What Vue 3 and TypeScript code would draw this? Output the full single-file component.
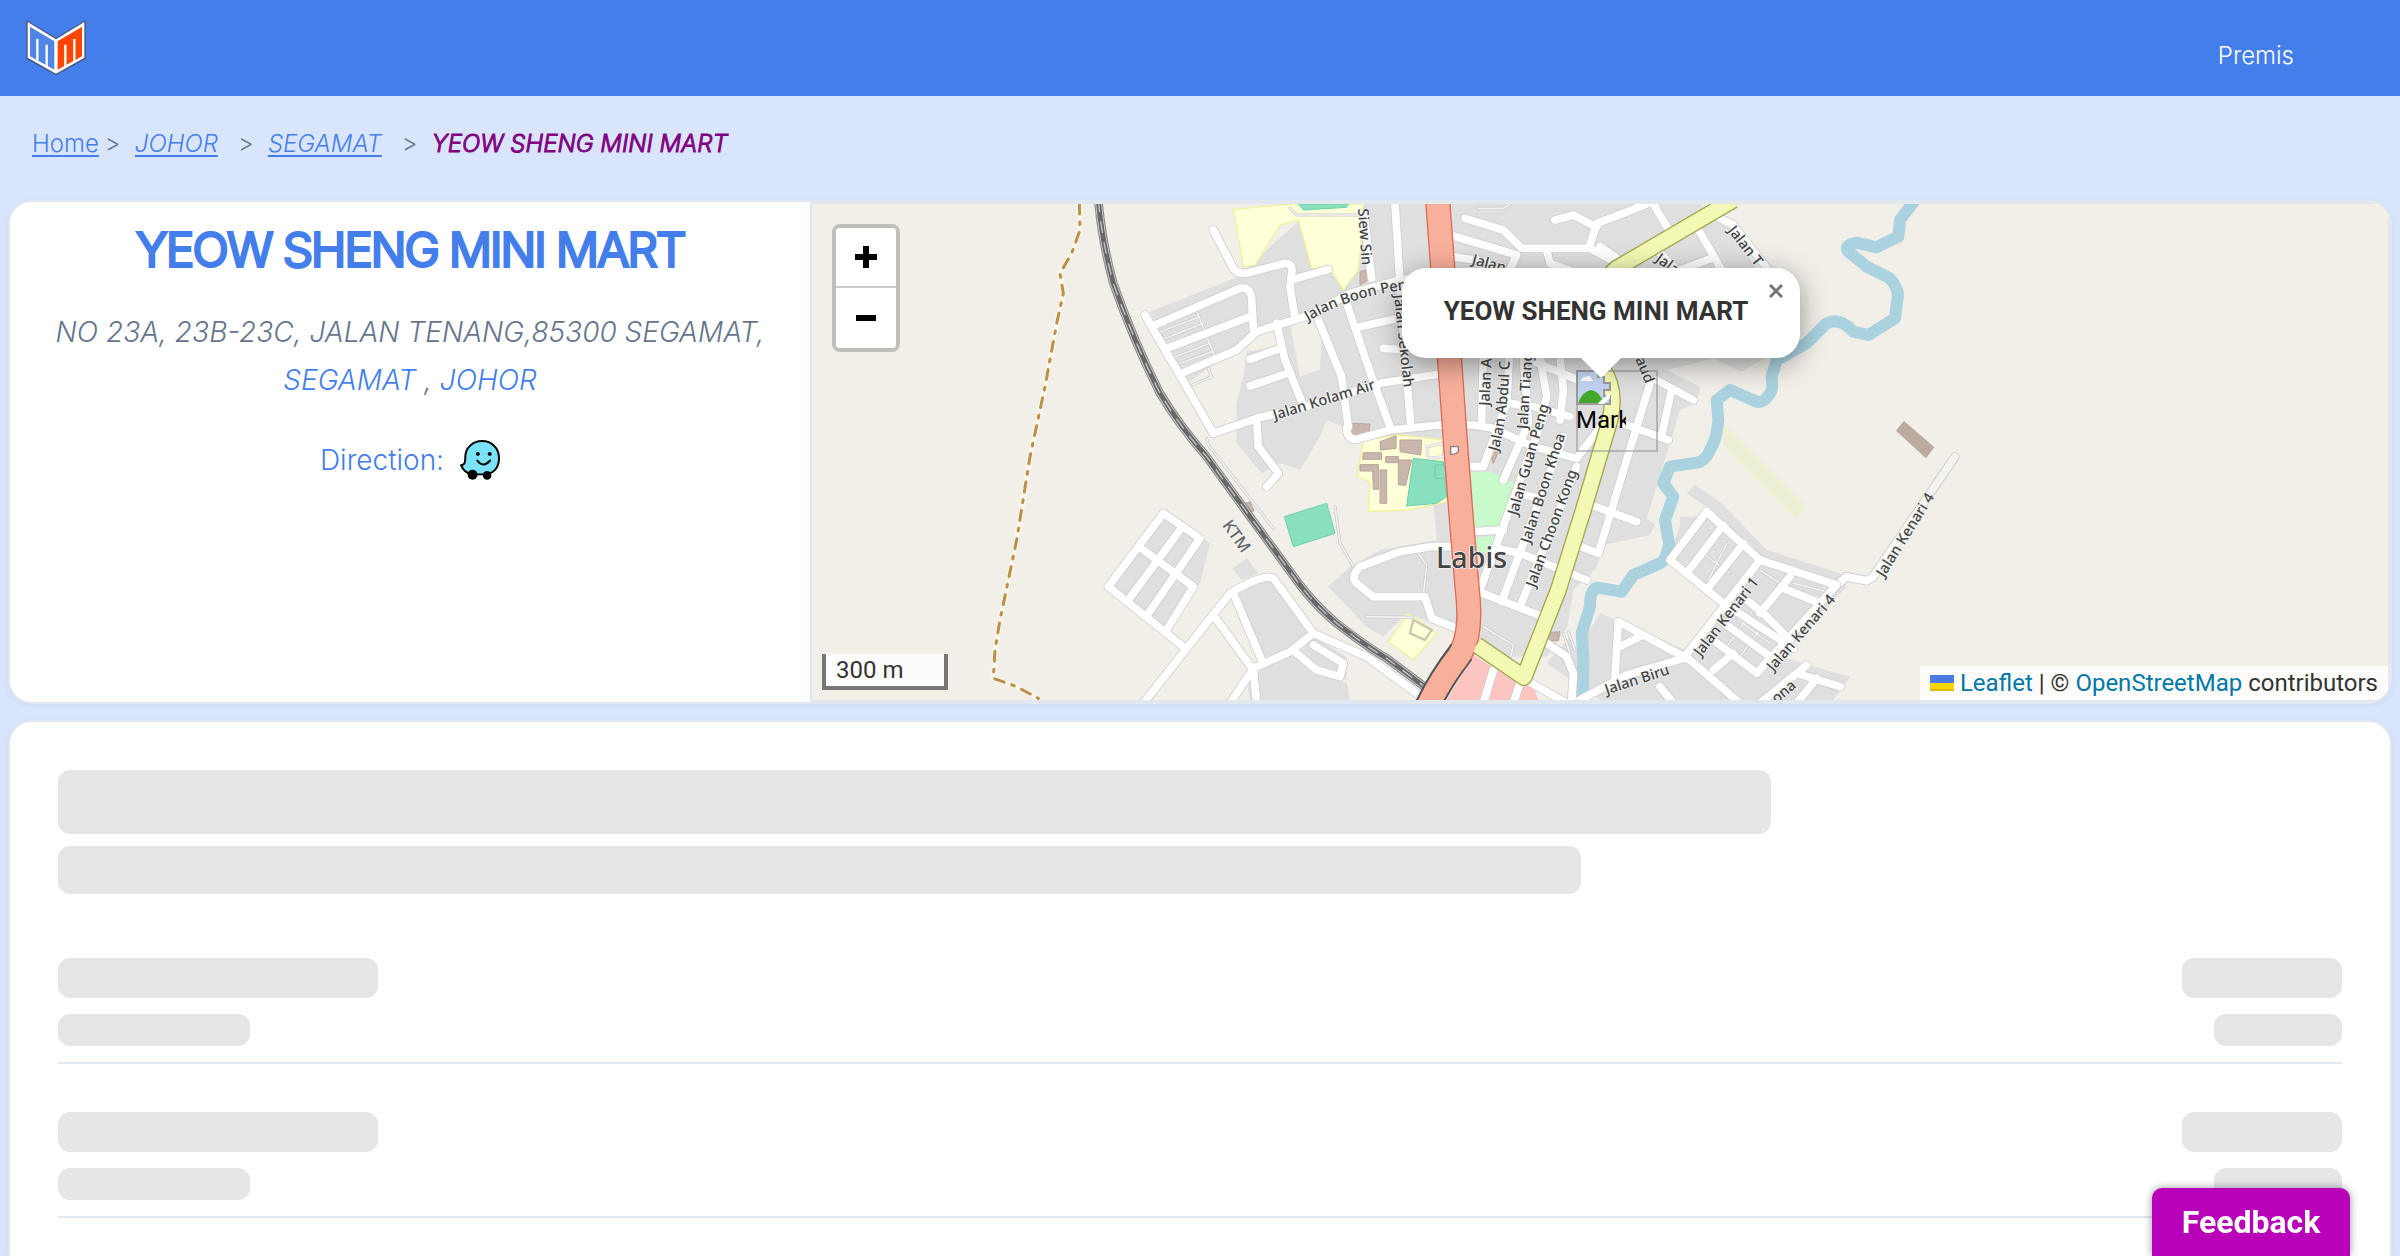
<script setup lang="ts">
interface StreetLabel {
  text: string
  x: number
  y: number
  angle: number
}

const crumbs = ['JOHOR', 'SEGAMAT']
const skeletonRows = [1, 2]

const residential = [
  '1050,365 1310,262 1400,180 1500,90 1680,42 2700,42 2790,110 2870,240 2900,500 2825,545 2740,505 2600,540 2700,590 2690,640 2640,660 2610,760 2540,985 2565,1005 2550,1035 2410,1065 2390,1130 2335,1200 2310,1300 2240,1400 2050,1400 1950,1320 1820,1270 1750,1340 1700,1310 1585,1190 1650,1130 1740,1080 1910,1050 1900,940 1930,750 1690,735 1580,690 1560,740 1500,840 1440,820 1385,850 1310,760 1310,640 1330,560 1340,485 1440,470 1430,400 1370,425 1150,590',
  '1090,965 1230,1060 1200,1180 1100,1320 920,1195',
  '1340,1105 1375,1150 1325,1170 1298,1135',
  '1310,1215 1390,1170 1520,1330 1480,1380 1395,1400',
  '1350,1180 1420,1165 1530,1330 1460,1390 1340,1470 1350,1530 1650,1530 1640,1480 1540,1440 1490,1400 1540,1340 1640,1400 1640,1470 1560,1450',
  '2685,885 2760,935 2900,1080 3120,1150 3140,1190 2940,1400 3150,1460 3100,1530 2400,1530 2240,1420 2310,1340 2400,1270 2670,1385 2770,1255 2600,1110 2640,1010 2640,980 2700,980 2720,950 2660,910',
]

const openLand = [
  '1470,400 1540,380 1565,450 1560,540 1500,560',
  '2320,1200 2360,1160 2400,1180 2400,1270 2330,1380 2300,1320',
]

const buildings = [
  '1645,700 1710,702 1705,735 1640,738',
  '1740,755 1788,738 1788,775 1742,780',
  '1800,750 1865,750 1862,795 1800,785',
  '1690,788 1745,788 1745,808 1688,808',
  '1680,824 1735,824 1735,898 1720,898 1718,843 1680,843',
  '1740,840 1760,840 1760,940 1740,940',
  '1757,800 1795,800 1795,818 1757,818',
  '1795,810 1835,810 1830,830 1817,886 1795,884',
  '2070,790 2095,785 2080,820',
  '2245,1328 2280,1325 2275,1352 2240,1352',
  '1680,245 1695,240 1705,270 1680,285',
  '1335,940 1350,935 1362,962 1350,968',
]

const servicePaths = [
  'M1470,55 L1490,75 L1680,75',
  'M1220,745 L1225,765 L1420,1015',
  'M1605,950 L1620,1060 L1660,1130',
  'M1855,1090 L1880,1125 L1870,1215',
  'M1700,1280 L1840,1282',
  'M1190,365 L1245,500',
  'M1080,425 L1200,380 M1090,448 L1210,400 M1115,505 L1230,460 M1125,525 L1235,485 M1165,590 L1235,560 L1225,535',
  'M2050,1310 L2140,1365 L2130,1410',
  'M2700,1085 L2790,1150 M2740,1030 L2670,1150 M2780,1060 L2720,1180 M2815,1290 L2910,1360 M2860,1260 L2780,1370 M2900,1290 L2820,1400',
  'M2880,1140 L2940,1180 L2900,1240 M2980,1180 L3080,1205 M2970,1195 L3070,1225',
  'M2035,55 L2110,55 L2130,42 M1880,770 L1930,760 L1930,800 L1885,805 Z',
  'M2290,1330 L2310,1390 M2305,1325 L2325,1380',
]

const streets = [
  'M1240,120 L1300,235 Q1315,255 1345,248 L1455,220 Q1480,220 1475,250 L1470,290 L1485,385',
  'M1035,375 L1240,730',
  'M1240,730 L1370,685 L1500,655 L1750,578 L1920,552',
  'M1065,405 L1320,295 Q1355,290 1355,330 L1360,415',
  'M1100,475 L1350,380',
  'M1145,550 L1310,480 L1370,425 L1530,375 L1650,310 L1800,270 L1920,250',
  'M1430,400 L1455,510 L1505,635',
  'M1350,508 L1440,475',
  'M1350,588 L1470,548',
  'M1370,690 L1375,770 L1435,850 L1400,890',
  'M1480,268 L1585,238',
  'M1555,390 L1625,560 L1645,710',
  'M1640,340 L1715,560 L1770,710',
  'M1680,410 L1795,385',
  'M1750,475 L1820,480',
  'M1640,715 Q1640,750 1670,748 L1770,720 L1920,705 L2020,705 L2080,715 L2200,770 L2330,805 L2410,700',
  'M1785,42 L1800,280 L1815,500 L1832,705',
  'M1692,70 L1715,265',
  'M1950,135 L2150,195 L2130,240',
  'M1995,85 L2110,120 L2165,175 L2370,175 L2460,225',
  'M1955,200 L2060,215',
  'M2240,180 L2250,220 L2320,245',
  'M2370,165 L2390,100 L2470,70 L2540,42',
  'M2265,90 L2320,75 L2390,112',
  'M2560,42 L2605,118',
  'M2690,110 L2765,240',
  'M2640,240 L2735,205',
  'M2750,80 L2800,105 L2905,240',
  'M2400,170 L2465,215',
  'M2580,190 L2640,250',
  'M2050,500 L2045,700',
  'M2128,500 L2120,640 L2050,830 L2000,830',
  'M2170,500 L2185,700 L2110,870',
  'M2220,500 L2240,620 L2220,700',
  'M2280,500 L2290,600 L2280,690',
  'M2190,510 L2360,580',
  'M2130,640 L2200,650 L2310,680',
  'M2230,680 L2040,1200',
  'M2290,740 L2105,1235',
  'M2330,830 L2160,1250',
  'M2035,1205 L2215,1275',
  'M2090,1075 L2160,1090 L2360,1170',
  'M2015,1025 L2110,1020',
  'M2150,910 L2220,925',
  'M2360,940 L2510,995',
  'M2550,580 L2395,1090 L2330,1065',
  'M2570,570 L2680,630',
  'M2615,600 L2585,735',
  'M2440,690 L2605,750',
  'M1970,1070 L1890,1070 L1800,1085 L1680,1130 Q1650,1160 1670,1180 L1720,1220 L1875,1220 L1895,1285 L1970,1315',
  'M1090,970 L925,1190 L1150,1370',
  'M1090,970 L1200,1045 L1045,1270',
  'M1140,1020 L985,1230',
  'M1030,1080 L1180,1190 L1100,1320',
  'M1030,1540 L1290,1210 Q1390,1150 1420,1165 L1540,1330 L1700,1400 L1850,1510',
  'M1240,1275 L1360,1440 L1370,1540',
  'M1300,1210 L1385,1410',
  'M1290,1540 L1360,1435 L1470,1385 L1540,1330',
  'M1490,1390 L1550,1440 L1620,1460 L1630,1420 L1540,1365',
  'M2170,1465 L2300,1540',
  'M2240,1360 L2300,1400 L2320,1450 L2315,1540',
  'M2080,1440 L2050,1540',
  'M2160,1480 L2140,1540',
  'M2340,1530 L2480,1455 L2650,1405 L2880,1110',
  'M2455,1295 L2670,1410 L2820,1540',
  'M2455,1295 L2445,1460',
  'M2460,1370 L2520,1340',
  'M2580,1490 L2620,1540',
  'M2720,965 L2610,1110 L2770,1240 L2980,1375',
  'M2720,965 L2880,1110 L3110,1185 L2870,1450 L2740,1350',
  'M2770,1005 L2660,1150',
  'M2830,1060 L2720,1200',
  'M2970,1160 L2880,1270',
  'M2950,1195 L3060,1240',
  'M2840,1230 L2890,1270 L2970,1350',
  'M2760,1290 L2910,1400',
  'M2800,1390 L2740,1440',
  'M2880,1540 L3020,1425',
  'M2990,1450 L3120,1490',
  'M3050,1465 L2990,1540',
]

const river =
  'M3345,30 L3300,90 L3295,140 Q3260,155 3230,172 L3170,158 Q3130,165 3145,185 L3200,230 L3270,265 Q3300,300 3292,330 L3285,385 L3205,435 L3160,425 Q3120,380 3080,400 L3020,460 L2930,510 L2915,560 Q2920,600 2910,610 Q2890,640 2870,635 L2790,600 L2750,630 L2755,690 Q2750,750 2730,780 Q2715,815 2690,818 L2610,830 L2590,880 L2620,920 L2595,990 L2607,1060 Q2600,1110 2580,1120 L2500,1155 L2465,1205 L2390,1193 Q2370,1200 2370,1250 L2345,1330 L2350,1400 L2348,1540'

const railway =
  'M895,30 Q905,150 940,280 Q1000,450 1080,610 Q1140,710 1220,800 L1350,980 L1500,1185 Q1550,1250 1610,1300 Q1700,1370 1760,1405 L1880,1495'
const trunk = 'M1913,30 L1948,500 L1968,780 L1985,1000 L2002,1200 Q2018,1340 1975,1400 Q1920,1470 1880,1555'
const secondary =
  'M2800,30 L2450,235 Q2370,300 2380,420 L2410,540 Q2450,600 2430,690 L2350,960 L2275,1200 L2172,1462 L2030,1365'
const footpath =
  'M838,42 L840,120 L815,190 L780,250 L790,310 L770,400 L735,590 L690,800 L650,1050 L600,1290 L585,1380 L580,1465 L650,1490 L715,1525'

const labels: StreetLabel[] = [
  { text: 'Siew Sin', x: 1674, y: 56, angle: 86 },
  { text: 'Jalan Kolam Air', x: 1424, y: 690, angle: -17 },
  { text: 'Jalan Sekolah', x: 1782, y: 315, angle: 84 },
  { text: 'Jalan A', x: 2068, y: 648, angle: -87 },
  { text: 'Jalan Tiang', x: 2182, y: 718, angle: -86 },
  { text: 'Jalan Guan Peng', x: 2152, y: 978, angle: -74 },
  { text: 'Jalan Boon Khoa', x: 2190, y: 1062, angle: -72 },
  { text: 'Jalan Choon Kong', x: 2205, y: 1194, angle: -70 },
  { text: 'aud', x: 2506, y: 508, angle: 68 },
  { text: 'Jalan', x: 2014, y: 222, angle: 15 },
  { text: 'Jalan', x: 2564, y: 212, angle: 36 },
  { text: 'Jalan T', x: 2782, y: 122, angle: 52 },
  { text: 'Jalan Kenari 1', x: 2702, y: 1402, angle: -52 },
  { text: 'Jalan Kenari 4', x: 2920, y: 1446, angle: -49 },
  { text: 'Jalan Kenari 4', x: 3252, y: 1164, angle: -58 },
  { text: 'Jalan Biru', x: 2420, y: 1514, angle: -18 },
  { text: 'ona', x: 2930, y: 1542, angle: -40 },
]
</script>

<template>
  <div class="page">
    <header class="topbar">
      <a href="#" class="brand" aria-label="Home">
        <svg viewBox="48 42 180 168" width="60" height="56">
          <path d="M49 42 L138 95 L227 42 V158 L138 208 L49 158 Z" fill="#4a5578" />
          <path d="M53 48 L138 100 L223 48 V155 L138 203 L53 155 Z" fill="#fff" />
          <path d="M60 62 L133 106 V191 L60 151 Z" fill="#5085e8" />
          <path d="M143 106 L216 62 V151 L143 191 Z" fill="#ff4500" />
          <path d="M82 164 V99 M110 180 V116 M166 180 V116 M193 164 V99" stroke="#fff" stroke-width="7" fill="none" />
        </svg>
      </a>
      <nav><a href="#" class="nav-link">Premis</a></nav>
    </header>

    <nav class="breadcrumb" aria-label="Breadcrumb">
      <a href="#">Home</a>
      <template v-for="crumb in crumbs" :key="crumb">
        <span class="sep">&gt;</span>
        <a href="#" class="place">{{ crumb }}</a>
      </template>
      <span class="sep">&gt;</span>
      <span class="current">YEOW SHENG MINI MART</span>
    </nav>

    <main class="content">
      <section class="store">
        <div class="info">
          <h1>YEOW SHENG MINI MART</h1>
          <address>
            NO 23A, 23B-23C, JALAN TENANG,85300 SEGAMAT,
            <br />
            <a href="#">SEGAMAT</a> , <a href="#">JOHOR</a>
          </address>
          <div class="direction">
            <span>Direction:</span>
            <a href="#" aria-label="Waze">
              <svg viewBox="66 60 121 121" width="40" height="40">
                <path
                  d="M133 63 C104 63 82 84 82 112 C82 130 80 135 69 136 C74 149 84 160 102 164 H140 C168 164 184 142 184 115 C184 84 161 63 133 63 Z"
                  fill="#7be3f7"
                  stroke="#000"
                  stroke-width="6"
                  stroke-linejoin="round"
                />
                <circle cx="104" cy="165" r="15" />
                <circle cx="148" cy="167" r="13" />
                <circle cx="120" cy="102" r="6" />
                <circle cx="156" cy="102" r="6" />
                <path d="M118 122 Q136 146 157 122" fill="none" stroke="#000" stroke-width="6" stroke-linecap="round" />
              </svg>
            </a>
          </div>
        </div>

        <div class="map">
          <svg class="tiles" viewBox="36 42 4728 1488" preserveAspectRatio="xMidYMid slice" aria-label="Map of Labis">
            <polygon v-for="area in residential" :key="area" :points="area" fill="#dfdfdf" />
            <polygon v-for="area in openLand" :key="area" :points="area" fill="#f2efe9" />
            <g stroke="#f0f0a0" stroke-width="4" fill="#ffffd8">
              <polygon
                points="1300,58 1480,42 1690,42 1690,80 1675,240 1630,300 1590,235 1535,235 1495,90 1440,105 1365,225 1330,230"
              />
              <polygon points="1690,750 1800,735 1935,750 1940,935 1830,960 1705,965 1710,875 1672,860" />
              <polygon points="1825,1270 1910,1330 1840,1410 1765,1355" />
            </g>
            <path d="M1840,1290 L1895,1320 L1875,1350 L1830,1330 Z" fill="none" stroke="#c8c8b0" stroke-width="7" />
            <g stroke="#6fcfa8" stroke-width="3" fill="#88e0be">
              <polygon points="1495,42 1645,42 1640,52 1510,60" />
              <polygon points="1453,980 1580,940 1605,1030 1480,1070" />
              <polygon points="1840,805 1930,815 1940,920 1910,940 1820,948" />
              <polygon points="1905,825 1935,825 1937,865 1905,865" />
            </g>
            <g fill="#c8facc">
              <polygon points="2005,850 2070,842 2140,880 2100,1010 2015,1015" />
              <polygon points="2020,1045 2100,1035 2070,1090 2025,1085" />
            </g>
            <polygon points="2020,1395 2090,1440 2200,1490 2215,1530 1940,1530" fill="#fdc5c2" />
            <polygon points="2770,700 3015,945 2990,990 2770,770" fill="#eef0d5" />
            <polygon points="3312,693 3403,772 3378,805 3288,722" fill="#bca9a0" />
            <path :d="river" fill="none" stroke="#aad3df" stroke-width="36" stroke-linejoin="round" />
            <g fill="#c9b7ae" stroke="#b8a39a" stroke-width="3">
              <polygon v-for="shape in buildings" :key="shape" :points="shape" />
            </g>
            <g fill="none" stroke-linecap="round" stroke-linejoin="round">
              <path v-for="d in servicePaths" :key="d" :d="d" stroke="#cacaca" stroke-width="9" />
              <path v-for="d in servicePaths" :key="'f' + d" :d="d" stroke="#f2f2f2" stroke-width="5" />
              <path d="M3465,800 L3220,1160 L3200,1172 L3140,1160 L3105,1190" stroke="#c8c8c8" stroke-width="28" />
              <path d="M3465,800 L3220,1160 L3200,1172 L3140,1160 L3105,1190" stroke="#f5f3ef" stroke-width="23" />
              <path d="M3340,985 L3220,1160 L3200,1172 L3140,1160 L3105,1190" stroke="#fff" stroke-width="23" />
              <path v-for="d in streets" :key="d" :d="d" stroke="#cfcfcf" stroke-width="28" />
              <path v-for="d in streets" :key="'f' + d" :d="d" stroke="#fff" stroke-width="23" />
            </g>
            <g fill="none" stroke-linejoin="round">
              <path :d="railway" stroke="#8c8c8c" stroke-width="26" />
              <path :d="railway" stroke="#dcdcdc" stroke-width="19" />
              <path :d="railway" stroke="#686868" stroke-width="15" />
              <path :d="railway" stroke="#c4c4c4" stroke-width="4" stroke-dasharray="36 28" />
              <path :d="footpath" stroke="#fbf6ea" stroke-width="15" />
              <path :d="footpath" stroke="#b8924a" stroke-width="9" stroke-dasharray="30 24 8 24" stroke-linecap="round" />
              <path :d="secondary" stroke="#a0a850" stroke-width="52" />
              <path :d="trunk" stroke="#dd6b5b" stroke-width="76" />
              <path d="M1985,1385 Q1920,1470 1880,1555" stroke="#555" stroke-width="80" />
              <path :d="secondary" stroke="#f3f8b4" stroke-width="44" />
              <path :d="trunk" stroke="#f9b09b" stroke-width="68" />
            </g>
            <path d="M1952,770 H1975 V785 Q1965,795 1952,793 Z" fill="#fff" stroke="#8a7a78" stroke-width="4" />
            <g class="street-labels">
              <text v-for="(label, i) in labels" :key="i" :transform="`translate(${label.x} ${label.y}) rotate(${label.angle})`">
                {{ label.text }}
              </text>
              <path id="boon-peng" d="M1524,394 Q1650,318 1840,296" fill="none" stroke="none" />
              <text><textPath href="#boon-peng">Jalan Boon Peng</textPath></text>
              <path id="abdul" d="M2094,786 Q2126,680 2130,480" fill="none" stroke="none" />
              <text><textPath href="#abdul">Jalan Abdul C</textPath></text>
            </g>
            <text class="rail-label" transform="translate(1265 1006) rotate(54)">KTM</text>
            <text class="town-label" x="1908" y="1135">Labis</text>
          </svg>

          <div class="zoom">
            <button type="button" aria-label="Zoom in">
              <svg viewBox="0 0 22 22" width="22" height="22"><path d="M8 0h6v8h8v6h-8v8H8v-8H0V8h8z" /></svg>
            </button>
            <button type="button" aria-label="Zoom out">
              <svg viewBox="0 0 22 22" width="22" height="22"><path d="M1 8h20v6H1z" /></svg>
            </button>
          </div>

          <div class="marker">
            <svg viewBox="0 0 36 36" width="36" height="36">
              <path d="M1 1 H22 V7 H28 V13 H34 V20 H28 V26 H34 V34 H1 Z" fill="#c2d3f2" stroke="#9a9a9a" stroke-width="2" />
              <path d="M5 10 Q7 6 10 7 Q13 4 15 8 L17 11 H5 Z" fill="#fff" />
              <path d="M2 33 Q7 21 15 20 Q22 21 26 29 L22 33 Z" fill="#43a82a" />
              <path d="M22 34 L34 22 V28 L28 34 Z" fill="#fff" />
            </svg>
            <span>Mark</span>
          </div>

          <div class="popup">
            <strong>YEOW SHENG MINI MART</strong>
            <button type="button" aria-label="Close popup">
              <svg viewBox="0 0 14 14" width="14" height="14">
                <path d="M1 1 L13 13 M13 1 L1 13" stroke="#757575" stroke-width="3" />
              </svg>
            </button>
          </div>

          <div class="scale">300 m</div>

          <div class="attribution">
            <svg viewBox="0 0 12 8" width="24" height="16">
              <path fill="#4C7BE1" d="M0 0h12v4H0z" />
              <path fill="#FFD500" d="M0 4h12v3H0z" />
              <path fill="#E0BC00" d="M0 7h12v1H0z" />
            </svg>
            <a href="#">Leaflet</a> | © <a href="#">OpenStreetMap</a> contributors
          </div>
        </div>
      </section>

      <section class="prices" aria-busy="true">
        <div class="bone title-bone"></div>
        <div class="bone subtitle-bone"></div>
        <div class="rows">
          <div v-for="row in skeletonRows" :key="row" class="row">
            <div class="pair">
              <div class="bone name-bone"></div>
              <div class="bone detail-bone"></div>
            </div>
            <div class="pair end">
              <div class="bone price-bone"></div>
              <div class="bone date-bone"></div>
            </div>
          </div>
        </div>
      </section>
    </main>

    <button type="button" class="feedback">Feedback</button>
  </div>
</template>

<style>
body {
  margin: 0;
  background: #d9e5fb;
}
</style>

<style scoped>
* {
  box-sizing: border-box;
}
.page {
  display: flex;
  flex-direction: column;
  min-height: 100vh;
  font-family: Inter, sans-serif;
  font-size: 24px;
  color: #64748b;
  background: #d9e5fb;
}
a {
  color: #437eeb;
  text-decoration: none;
}
button {
  border: 0;
  padding: 0;
  cursor: pointer;
}
.topbar {
  display: flex;
  justify-content: space-between;
  align-items: center;
  height: 96px;
  padding: 0 106px 0 26px;
  background: #437eeb;
}
.brand svg {
  display: block;
}
.nav-link {
  display: block;
  padding-top: 14px;
  color: #fff;
  font-weight: 300;
}
.breadcrumb {
  display: flex;
  align-items: center;
  height: 96px;
  padding: 0 32px 2px;
  font-weight: 300;
}
.breadcrumb a {
  text-decoration: underline;
  text-decoration-thickness: 2px;
  text-underline-offset: 3px;
}
.sep {
  width: 36px;
  padding-left: 6px;
}
.place {
  margin-right: 14px;
  font-style: italic;
}
.current {
  color: #800080;
  font-style: italic;
  -webkit-text-stroke: 1px #800080;
}
.content {
  display: flex;
  flex: 1;
  flex-direction: column;
  gap: 16px;
  padding: 8px 8px 0;
}
.store,
.prices {
  border: 2px solid #e2e8f0;
  border-radius: 24px;
  background: #fff;
  box-shadow: 0 2px 6px rgba(0, 0, 0, 0.05);
}
.store {
  display: flex;
  height: 504px;
  overflow: hidden;
}
.info {
  display: flex;
  flex: none;
  flex-direction: column;
  align-items: center;
  width: calc(100vw / 3);
  padding-top: 16px;
  text-align: center;
}
h1 {
  margin: 0;
  color: #437eeb;
  font-size: 48px;
  font-weight: 400;
  line-height: 64px;
  letter-spacing: -0.05em;
  -webkit-text-stroke: 2px #437eeb;
}
address {
  margin-top: 26px;
  font-size: 28px;
  font-weight: 350;
  line-height: 48px;
}
.direction {
  display: flex;
  align-items: center;
  gap: 16px;
  margin-top: 36px;
  color: #437eeb;
  font-size: 28px;
  font-weight: 350;
}
.direction svg {
  display: block;
}
.map {
  position: relative;
  flex: 1;
  min-width: 0;
  overflow: hidden;
  border: 2px solid #e2e8f0;
  background: #f2efe9;
  color: #333;
  font-family: Roboto, sans-serif;
}
.tiles {
  display: block;
  width: 100%;
  height: 100%;
}
.tiles text {
  font-family: 'Noto Sans', sans-serif;
  font-weight: 500;
  fill: #444;
  stroke: #f4f4f4;
  stroke-width: 5px;
  stroke-linejoin: round;
  paint-order: stroke;
}
.street-labels text {
  font-size: 44px;
}
.tiles .rail-label {
  font-size: 50px;
  fill: #666;
}
.tiles .town-label {
  font-size: 86px;
}
.zoom {
  position: absolute;
  top: 20px;
  left: 20px;
  display: flex;
  flex-direction: column;
  border: 4px solid rgba(0, 0, 0, 0.2);
  border-radius: 8px;
  background-clip: padding-box;
}
.zoom button {
  display: grid;
  place-items: center;
  width: 60px;
  height: 60px;
  background: #fff;
}
.zoom button:first-child {
  border-bottom: 2px solid #ccc;
  border-radius: 4px 4px 0 0;
}
.zoom button:last-child {
  border-radius: 0 0 4px 4px;
}
.marker {
  position: absolute;
  top: 166px;
  left: calc(50% - 24px);
  width: 82px;
  height: 82px;
  box-shadow: inset 0 0 0 2px rgba(140, 140, 140, 0.5);
  color: #000;
}
.marker svg {
  display: block;
}
.marker span {
  display: block;
  width: 50px;
  overflow: hidden;
  line-height: 28px;
}
.popup {
  position: absolute;
  top: 64px;
  left: 50%;
  display: flex;
  align-items: center;
  justify-content: center;
  width: 398px;
  height: 90px;
  padding-right: 10px;
  border-radius: 24px;
  transform: translateX(-50%);
  margin-left: 1px;
  background: #fff;
  box-shadow: 0 6px 28px rgba(0, 0, 0, 0.4);
  font-size: 26px;
}
.popup strong {
  padding-bottom: 4px;
  white-space: nowrap;
}
.popup::after {
  content: '';
  position: absolute;
  top: 100%;
  left: 50%;
  margin-left: -20px;
  border: 20px solid transparent;
  border-top-color: #fff;
  border-bottom: 0;
}
.popup button {
  position: absolute;
  top: 0;
  right: 0;
  display: grid;
  place-items: center;
  width: 48px;
  height: 46px;
  background: none;
}
.scale {
  position: absolute;
  bottom: 10px;
  left: 10px;
  width: 126px;
  height: 36px;
  padding-left: 10px;
  border: 4px solid #777;
  border-top: 0;
  background: rgba(255, 255, 255, 0.8);
  line-height: 32px;
}
.attribution {
  position: absolute;
  right: 0;
  bottom: 0;
  padding: 0 10px;
  background: rgba(255, 255, 255, 0.8);
  line-height: 34px;
  white-space: nowrap;
}
.attribution svg {
  margin-right: 6px;
}
.attribution a {
  color: #0078a8;
}
.prices {
  flex: 1;
  padding: 48px 48px 0;
  border-bottom: 0;
  border-radius: 24px 24px 0 0;
}
.bone {
  border-radius: 12px;
  background: #e5e6e8;
}
.title-bone {
  width: 75%;
  height: 64px;
}
.subtitle-bone {
  width: calc(200% / 3);
  height: 48px;
  margin-top: 12px;
}
.rows {
  padding-top: 16px;
}
.row {
  display: flex;
  justify-content: space-between;
  padding: 48px 0 16px;
  border-bottom: 2px solid #e2e8f0;
}
.pair {
  display: flex;
  flex-direction: column;
  gap: 16px;
}
.end {
  align-items: flex-end;
}
.name-bone {
  width: 320px;
  height: 40px;
}
.detail-bone {
  width: 192px;
  height: 32px;
}
.price-bone {
  width: 160px;
  height: 40px;
}
.date-bone {
  width: 128px;
  height: 32px;
}
.feedback {
  position: fixed;
  right: 50px;
  bottom: 0;
  width: 198px;
  height: 68px;
  border-radius: 10px 10px 0 0;
  background: #b800b8;
  box-shadow: 0 0 8px rgba(0, 0, 0, 0.4);
  color: #fff;
  font-family: Roboto, sans-serif;
  font-size: 32px;
  font-weight: 700;
}
</style>
